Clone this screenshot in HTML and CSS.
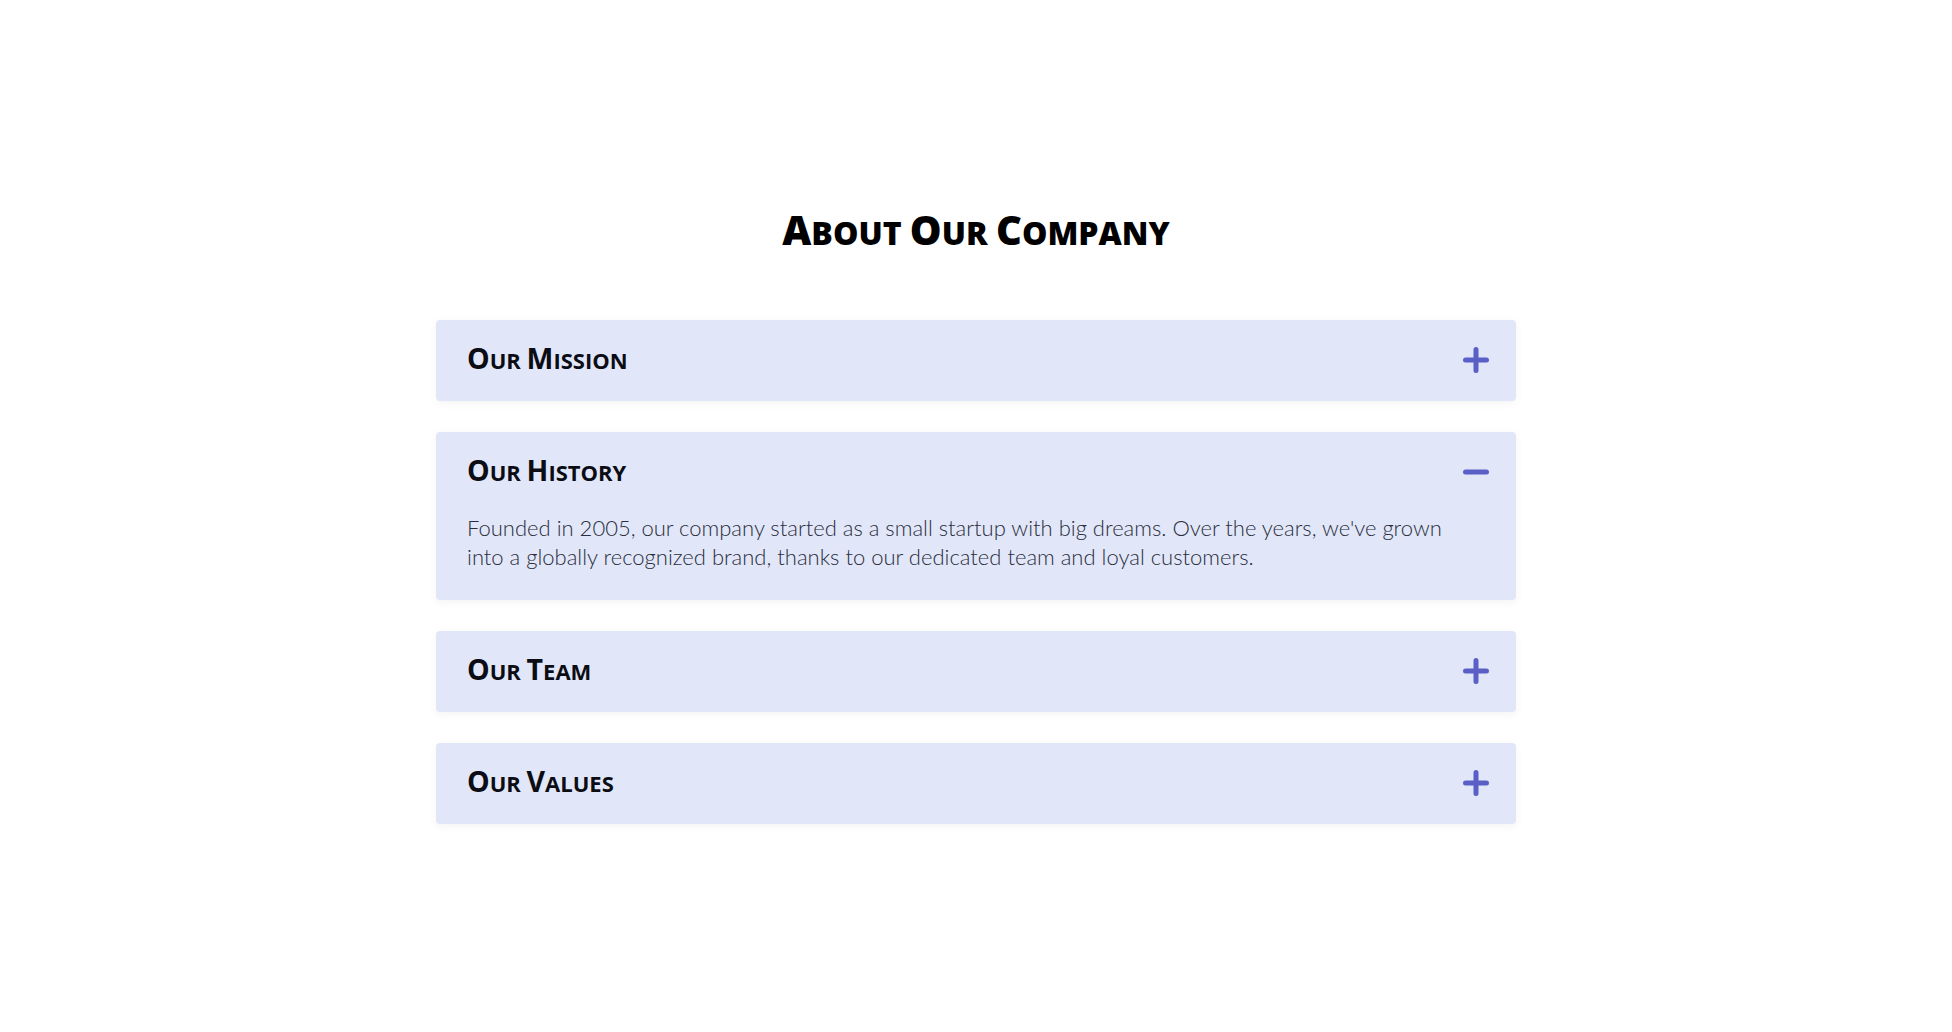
FILE: index.html
```html
<!DOCTYPE html>
<html lang="en">
<head>
<meta charset="utf-8">
<title>About Our Company</title>
<link rel="stylesheet" href="styles.css">
</head>
<body>
  <main class="about">
    <h1 class="about-title"><span class="ini">A</span>bout <span class="ini">O</span>ur <span class="ini">C</span>ompany</h1>
    <div class="accordion">
      <section class="acc-item">
        <div class="acc-head">
          <h2 class="acc-title"><span class="ini">O</span>ur <span class="ini">M</span>ission</h2>
          <svg class="acc-icon" viewBox="0 0 26 26" aria-hidden="true"><path d="M13 2.5v21M2.5 13h21"/></svg>
        </div>
      </section>
      <section class="acc-item open">
        <div class="acc-head">
          <h2 class="acc-title"><span class="ini">O</span>ur <span class="ini">H</span>istory</h2>
          <svg class="acc-icon" viewBox="0 0 26 26" aria-hidden="true"><path d="M2.5 13h21"/></svg>
        </div>
        <div class="acc-body">
          <p>Founded in 2005, our company started as a small startup with big dreams. Over the years, we've grown into a globally recognized brand, thanks to our dedicated team and loyal customers.</p>
        </div>
      </section>
      <section class="acc-item">
        <div class="acc-head">
          <h2 class="acc-title"><span class="ini">O</span>ur <span class="ini">T</span>eam</h2>
          <svg class="acc-icon" viewBox="0 0 26 26" aria-hidden="true"><path d="M13 2.5v21M2.5 13h21"/></svg>
        </div>
      </section>
      <section class="acc-item">
        <div class="acc-head">
          <h2 class="acc-title"><span class="ini">O</span>ur <span class="ini">V</span>alues</h2>
          <svg class="acc-icon" viewBox="0 0 26 26" aria-hidden="true"><path d="M13 2.5v21M2.5 13h21"/></svg>
        </div>
      </section>
    </div>
  </main>
</body>
</html>
```

FILE: styles.css
```css
html, body {
  margin: 0;
  padding: 0;
  background: #ffffff;
}

body {
  min-height: 100vh;
  display: flex;
  align-items: center;
  justify-content: center;
  font-family: "Open Sans", "Noto Sans", sans-serif;
  color: #000;
}

.about {
  width: 1080px;
}

/* Headings are set in caps: the initials at full size, the rest smaller */
.about-title {
  margin: 0 0 63px;
  text-align: center;
  font-family: "Open Sans", "Noto Sans", sans-serif;
  font-size: 32px;
  line-height: 48px;
  font-weight: 800;
  text-transform: uppercase;
  color: #000;
}

.about-title .ini {
  font-size: 40px;
  line-height: 1;
}

.accordion {
  display: flex;
  flex-direction: column;
  gap: 31px;
}

.acc-item {
  background: #e1e7f9;
  border-radius: 4px;
  box-shadow: 0 2px 10px rgba(0, 0, 0, 0.05);
}

.acc-head {
  display: flex;
  align-items: center;
  justify-content: space-between;
  padding: 24px 27px 24px 31px;
}

.acc-title {
  margin: 0;
  font-size: 22px;
  line-height: 33px;
  font-weight: 700;
  text-transform: uppercase;
  color: #0c0d14;
}

.acc-title .ini {
  font-size: 28.5px;
  line-height: 1;
}

.acc-icon {
  width: 26px;
  height: 26px;
  fill: none;
  stroke: #5a5fc6;
  stroke-width: 5;
  stroke-linecap: round;
}

.acc-body {
  padding: 0 45px 29px 31px;
}

.acc-body p {
  margin: 0;
  font-family: "Lato", sans-serif;
  font-weight: 300;
  font-size: 22px;
  line-height: 29px;
  color: #2b2e3c;
}
```
